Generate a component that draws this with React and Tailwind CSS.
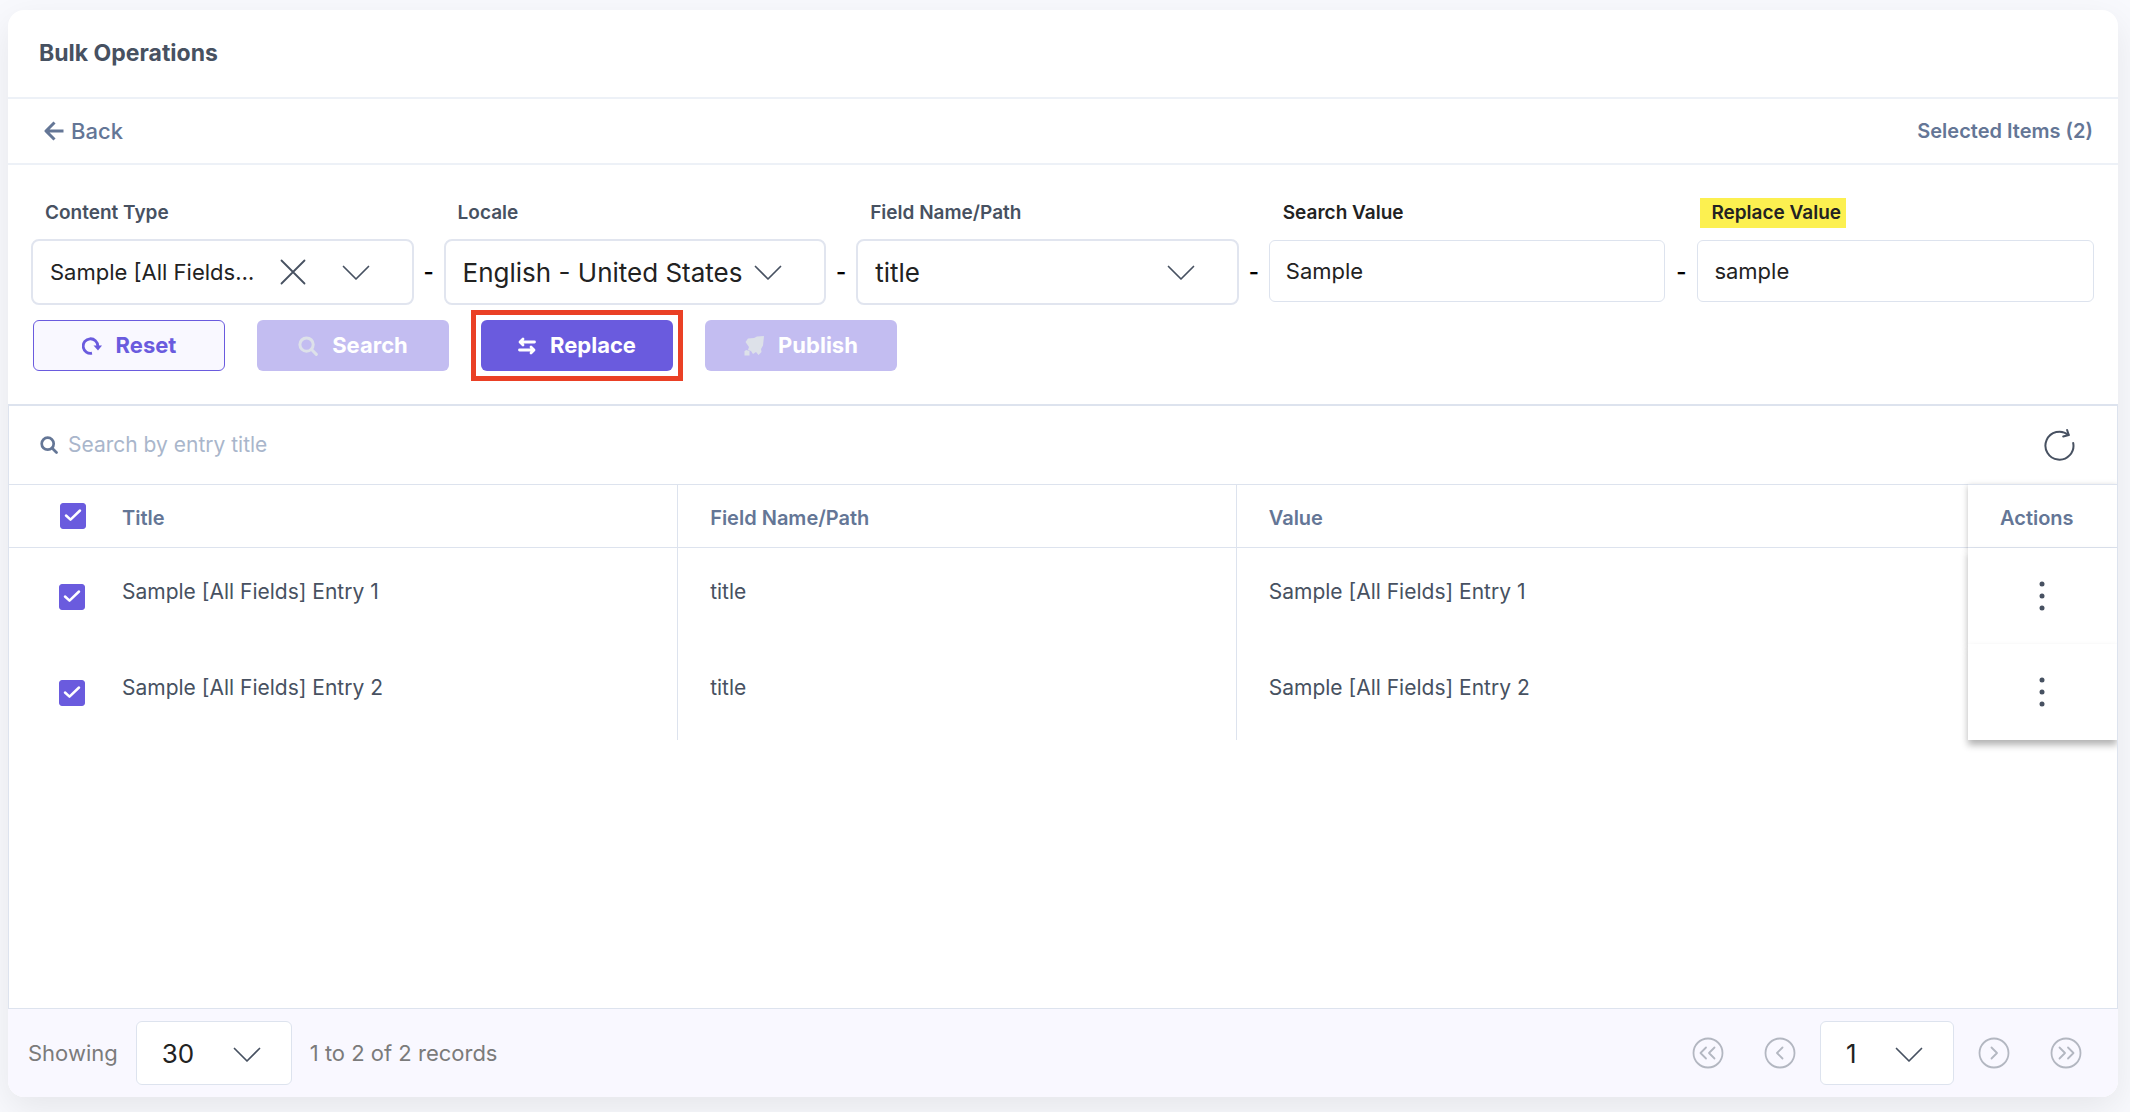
import React, { useState } from 'react';

const ENTRIES = [
    { id: 1, title: 'Sample [All Fields] Entry 1', field: 'title' },
    { id: 2, title: 'Sample [All Fields] Entry 2', field: 'title' },
];

const Chevron = ({ className = '' }) => (
    <svg className={`pointer-events-none absolute ${className}`} width="28" height="16" viewBox="0 0 28 16" fill="none" stroke="#475161" strokeWidth="1.7" strokeLinecap="round" strokeLinejoin="round">
        <path d="M1.5 1.5L14 14L26.5 1.5" />
    </svg>
);

const BackIcon = () => (
    <svg width="20" height="20" viewBox="0 0 20 20" fill="none" stroke="currentColor" strokeWidth="3" strokeLinejoin="round">
        <path d="M19.500 10H2M10.500 1.500L2 10L10.500 18.500" />
    </svg>
);

const SearchIcon = ({ size = 18 }) => (
    <svg width={size} height={size} viewBox="0 0 18 18" fill="none" stroke="currentColor" strokeWidth="2.7" strokeLinecap="round">
        <circle cx="7.700" cy="7.700" r="6" />
        <path d="M12.200 12.200L16.500 16.500" />
    </svg>
);

const ResetIcon = () => (
    <svg width="20" height="20" viewBox="0 0 20 20" fill="none">
        <path d="M10 17.200A7.300 7.300 0 1 1 15.800 10" stroke="currentColor" strokeWidth="2.8" />
        <path d="M11.500 9.500H20L16 14.500Z" fill="currentColor" />
    </svg>
);

const ReplaceIcon = () => (
    <svg width="18" height="18" viewBox="0 0 18 18" fill="none" stroke="currentColor" strokeWidth="2.8" strokeLinecap="round" strokeLinejoin="round">
        <path d="M16.500 5H2.500M5 2L2 5L5 8" />
        <path d="M1.500 13H15.500M13 10L16 13L13 16" />
    </svg>
);

const PublishIcon = () => (
    <svg width="20" height="20" viewBox="0 0 20 20" fill="currentColor">
        <path d="M20 0L19 9.500L17 13L17.500 16L14.500 19L12 16L9 18L7 15L4 14L5 11L1.500 6L4 2.500L10 2L13 0.500Z" />
        <path d="M0.500 15.500L2 14L5.500 15V19.500H0.500Z" />
    </svg>
);

const RefreshIcon = () => (
    <svg width="32" height="34" viewBox="0 0 32 34" fill="none" stroke="#475161" strokeWidth="2" strokeLinecap="round" strokeLinejoin="round">
        <path d="M29.200 15A14 14 0 1 1 24.500 7" />
        <path d="M23.100 2L24.800 7L19.200 8.500" />
    </svg>
);

function Field({ id, label, labelClass = 'text-[#475161]', children }) {
    return (
        <div className="flex min-w-0 flex-col">
            <div className="mb-[11px] flex h-[30px] pl-[3px]">
                <label htmlFor={id} className={`pr-[5px] pl-[11px] text-[19px] leading-[30px] font-semibold ${labelClass}`}>
                    {label}
                </label>
            </div>
            {children}
        </div>
    );
}

const Dash = () => <span className="flex h-[66px] items-center justify-center self-end text-[22px] font-semibold text-black">-</span>;

function FilterSelect({ id, value, textClass, clearable }) {
    return (
        <div className="relative">
            <select
                id={id}
                defaultValue={value}
                className={`h-[66px] w-full appearance-none rounded-lg border-2 border-[#e1e5ef] bg-white pl-[17px] text-ellipsis text-[#222] outline-none ${textClass}`}
            >
                <option>{value}</option>
            </select>
            {clearable && (
                <button type="button" aria-label="Clear content type" className="absolute top-[20px] right-[108px]">
                    <svg width="26" height="26" viewBox="0 0 26 26" stroke="#475161" strokeWidth="1.8" strokeLinecap="round">
                        <path d="M1.500 1.500L24.500 24.500M24.500 1.500L1.500 24.500" />
                    </svg>
                </button>
            )}
            <Chevron className="top-[26px] right-[44px]" />
        </div>
    );
}

function ActionButton({ icon, label, variant, ...rest }) {
    const styles = {
        outline: 'border border-[#6a5bde] bg-[#f9f8ff] text-[#6a5bde]',
        primary: 'bg-[#6a5bde] text-white',
        disabled: 'bg-[#c3bdf1] text-white',
    };
    return (
        <button
            type="button"
            className={`flex h-[51px] w-[192px] items-center justify-center gap-[14px] rounded-md text-[22px] font-bold ${styles[variant]}`}
            {...rest}
        >
            <span className={variant === 'disabled' ? 'text-[#dde1e9]' : ''}>{icon}</span>
            {label}
        </button>
    );
}

function Checkbox({ label, checked, onChange }) {
    return (
        <label className="relative block size-[26px]">
            <input
                type="checkbox"
                aria-label={label}
                checked={checked}
                onChange={onChange}
                className="peer block size-[26px] appearance-none rounded-[3px] border border-[#6a5bde] bg-white checked:bg-[#6a5bde]"
            />
            <svg className="pointer-events-none absolute inset-0 hidden peer-checked:block" width="26" height="26" viewBox="0 0 26 26" fill="none" stroke="white" strokeWidth="2.5" strokeLinecap="round" strokeLinejoin="round">
                <path d="M6 12.500L10.500 16.700L20 7.500" />
            </svg>
        </label>
    );
}

function PageButton({ label, path }) {
    return (
        <button type="button" aria-label={label} className="text-[#b3b7c1]">
            <svg width="32" height="32" viewBox="0 0 32 32" fill="none" stroke="currentColor" strokeWidth="1.8" strokeLinecap="round" strokeLinejoin="round">
                <circle cx="16" cy="16" r="14.500" />
                <path d={path} />
            </svg>
        </button>
    );
}

function FooterSelect({ label, value, className }) {
    return (
        <div className={`relative ${className}`}>
            <select
                aria-label={label}
                defaultValue={value}
                className="h-[64px] w-full appearance-none rounded-md border border-[#dde3ee] bg-white pl-[25px] text-[26px] text-[#222] outline-none"
            >
                <option>{value}</option>
            </select>
            <Chevron className="top-[26px] right-[31px]" />
        </div>
    );
}

function App() {
    const [selected, setSelected] = useState([1, 2]);

    const toggle = (id) =>
        setSelected(selected.includes(id) ? selected.filter((s) => s !== id) : [...selected, id]);
    const allSelected = selected.length === ENTRIES.length;

    return (
        <div className="flex min-h-screen flex-col bg-[#f8f9fd] pt-[10px] pr-[12px] pb-[15px] pl-[8px] font-['Inter',sans-serif]">
            <main className="flex flex-1 flex-col overflow-hidden rounded-2xl bg-white shadow-[0_12px_36px_rgba(0,0,0,0.08)]">
                <header className="flex h-[89px] items-center border-b-2 border-[#edf1f7] px-[31px]">
                    <h1 className="text-[23px] font-bold text-[#475161]">Bulk Operations</h1>
                </header>

                <div className="flex h-[66px] items-center justify-between border-b-2 border-[#edf1f7] pr-[25px] pl-[36px] text-[#647696]">
                    <a href="#back" className="flex items-center gap-[7px] text-[22px] font-medium">
                        <BackIcon />
                        Back
                    </a>
                    <span className="text-[20px] font-semibold">Selected Items ({selected.length})</span>
                </div>

                <section className="pt-[33px] pr-6 pb-[33px] pl-[23px]">
                    <div className="grid grid-cols-[382fr_30px_382fr_30px_382fr_30px_396fr_32px_396fr]">
                        <Field id="content-type" label="Content Type">
                            <FilterSelect id="content-type" value="Sample [All Fields] Content" textClass="text-[22px] pr-[156px]" clearable />
                        </Field>
                        <Dash />
                        <Field id="locale" label="Locale">
                            <FilterSelect id="locale" value="English - United States" textClass="text-[26px] pr-[80px]" />
                        </Field>
                        <Dash />
                        <Field id="field-path" label="Field Name/Path">
                            <FilterSelect id="field-path" value="title" textClass="text-[26px] pr-[80px]" />
                        </Field>
                        <Dash />
                        <Field id="search-value" label="Search Value" labelClass="text-[#222]">
                            <input id="search-value" defaultValue="Sample" className="mt-px h-[62px] w-full rounded-md border border-[#dde3ee] px-[16px] text-[22px] text-[#222] outline-none" />
                        </Field>
                        <Dash />
                        <Field id="replace-value" label="Replace Value" labelClass="bg-[#fcf050] text-[#222]">
                            <input id="replace-value" defaultValue="sample" className="mt-px h-[62px] w-full rounded-md border border-[#dde3ee] px-[16px] text-[22px] text-[#222] outline-none" />
                        </Field>
                    </div>

                    <div className="mt-[15px] flex gap-8 pl-[2px]">
                        <ActionButton icon={<ResetIcon />} label="Reset" variant="outline" />
                        <ActionButton icon={<SearchIcon size={20} />} label="Search" variant="disabled" disabled />
                        <div className="outline-[5px] outline-offset-[5px] outline-[#ea4025]">
                            <ActionButton icon={<ReplaceIcon />} label="Replace" variant="primary" />
                        </div>
                        <ActionButton icon={<PublishIcon />} label="Publish" variant="disabled" disabled />
                    </div>
                </section>

                <section className="flex-1 overflow-hidden border border-t-2 border-[#dde3ee]">
                    <div className="flex h-[78px] items-center justify-between pr-[41px] pl-[31px]">
                        <label className="flex flex-1 items-center gap-[10px] text-[#647696]">
                            <SearchIcon />
                            <input placeholder="Search by entry title" aria-label="Search by entry title" className="w-[400px] text-[21px] outline-none placeholder:text-[#a9b6cb]" />
                        </label>
                        <button type="button" aria-label="Refresh">
                            <RefreshIcon />
                        </button>
                    </div>

                    <table className="w-full table-fixed border-separate border-spacing-0 text-left">
                        <colgroup>
                            <col className="w-[81px]" />
                            <col className="w-[27.9%]" />
                            <col className="w-[26.5%]" />
                            <col />
                            <col className="w-[149px]" />
                        </colgroup>
                        <thead>
                            <tr className="h-[64px] text-[20px] text-[#647696] *:border-y *:border-[#dde3ee] *:font-semibold">
                                <th className="pl-[51px]">
                                    <Checkbox label="Select all" checked={allSelected} onChange={() => setSelected(allSelected ? [] : ENTRIES.map((e) => e.id))} />
                                </th>
                                <th className="border-r pt-[3px] pl-8">Title</th>
                                <th className="border-r pt-[3px] pl-8">Field Name/Path</th>
                                <th className="pt-[3px] pl-8">Value</th>
                                <th className="bg-white pt-[3px] pl-8 shadow-[0_2px_6px_rgba(0,0,0,0.25)]">Actions</th>
                            </tr>
                        </thead>
                        <tbody>
                            {ENTRIES.map((entry) => (
                                <tr key={entry.id} className="h-[96px] align-top text-[21px] leading-[28px] text-[#475161] *:pt-[30px]">
                                    <td className="pl-[50px]">
                                        <div className="pt-[6px]">
                                            <Checkbox label={`Select ${entry.title}`} checked={selected.includes(entry.id)} onChange={() => toggle(entry.id)} />
                                        </div>
                                    </td>
                                    <td className="border-r border-[#dde3ee] pl-8">{entry.title}</td>
                                    <td className="border-r border-[#dde3ee] pl-8">{entry.field}</td>
                                    <td className="pl-8">{entry.title}</td>
                                    <td className="bg-white shadow-[0_5px_7px_rgba(0,0,0,0.3)]">
                                        <button type="button" aria-label="Entry actions" className="mx-auto block pt-[2px] pr-[2px]">
                                            <svg width="8" height="32" viewBox="0 0 8 32" fill="#475161">
                                                <circle cx="4" cy="4" r="2.500" />
                                                <circle cx="4" cy="16" r="2.500" />
                                                <circle cx="4" cy="28" r="2.500" />
                                            </svg>
                                        </button>
                                    </td>
                                </tr>
                            ))}
                        </tbody>
                    </table>
                </section>

                <footer className="flex h-[88px] items-center justify-between bg-[#f9f8ff] pr-[36px] pl-[20px] text-[22px] text-[#7b7b7b]">
                    <div className="flex items-center gap-[18px]">
                        <span>Showing</span>
                        <FooterSelect label="Rows per page" value="30" className="w-[156px]" />
                        <span>1 to 2 of 2 records</span>
                    </div>
                    <nav aria-label="Pagination" className="flex items-center">
                        <div className="flex gap-10">
                            <PageButton label="First page" path="M14 10.500L8.500 16L14 21.500M22.500 10.500L17 16L22.500 21.500" />
                            <PageButton label="Previous page" path="M18.500 10.500L13 16L18.500 21.500" />
                        </div>
                        <FooterSelect label="Page" value="1" className="mx-[24px] w-[134px]" />
                        <div className="flex gap-10">
                            <PageButton label="Next page" path="M13.500 10.500L19 16L13.500 21.500" />
                            <PageButton label="Last page" path="M9.500 10.500L15 16L9.500 21.500M18 10.500L23.500 16L18 21.500" />
                        </div>
                    </nav>
                </footer>
            </main>
        </div>
    );
}

export default App;
